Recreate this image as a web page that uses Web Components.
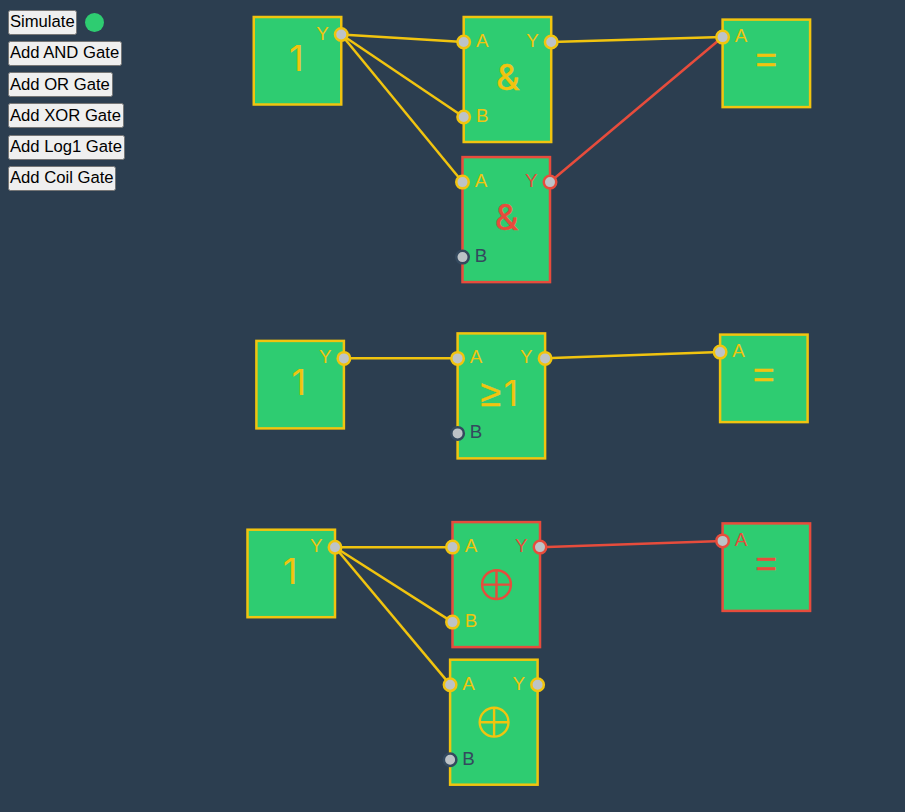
<!DOCTYPE html>
<html lang="en">
<head>
<meta charset="utf-8">
<title>Logic simulator</title>
<style>
html,body{margin:0;height:100%;background:#2c3e50;overflow:hidden}
body{font-family:"Liberation Sans",Arial,sans-serif}
</style>
</head>
<body>
<logic-app></logic-app>
<script>
const COLORS = { on: '#f1c40f', off: '#e74c3c', none: '#34495e' };

class ToolButton extends HTMLElement {
  constructor() {
    super();
    this.attachShadow({ mode: 'open' }).innerHTML = `
      <style>
        :host{display:block;height:25px}
        button{display:block;box-sizing:border-box;height:25px;margin:0;padding:0 1.75px var(--lift,2px) .9px;border:1px solid #767676;border-radius:2.5px;
          background:#efefef;color:#000;font:16.667px/20px "Liberation Sans",Arial,sans-serif;white-space:nowrap}
      </style>
      <button><slot></slot></button>`;
  }
}
customElements.define('tool-button', ToolButton);

class StatusLamp extends HTMLElement {
  constructor() {
    super();
    this.attachShadow({ mode: 'open' }).innerHTML = `
      <style>:host{display:block;width:19px;height:19px;border-radius:50%;background:#2ecc71}</style>`;
  }
}
customElements.define('status-lamp', StatusLamp);

class ToolPanel extends HTMLElement {
  constructor() {
    super();
    this.attachShadow({ mode: 'open' }).innerHTML = `
      <style>
        :host{display:flex;flex-direction:column;align-items:flex-start;gap:6px;padding:10px 8px}
        .row{display:flex;align-items:center;gap:8px}
        .low{--lift:0px}
        .space{margin-top:1px}
        status-lamp{margin-top:-1px}
      </style>
      <div class="row"><tool-button>Simulate</tool-button><status-lamp></status-lamp></div>
      <tool-button>Add AND Gate</tool-button>
      <tool-button class="low">Add OR Gate</tool-button>
      <tool-button class="low">Add XOR Gate</tool-button>
      <tool-button class="space">Add Log1 Gate</tool-button>
      <tool-button>Add Coil Gate</tool-button>`;
  }
}
customElements.define('tool-panel', ToolPanel);

/* Symbol in the middle of a gate; (43.75, cy) is the body's centre. */
const SYMBOLS = {
  and:  (cy, c) => `<text class="symbol amp" x="43.9" y="${cy + 10.8}" fill="${c}" stroke="${c}" stroke-width=".4">&amp;</text>`,
  or:   (cy, c) => `<text class="symbol" x="33.2" y="${cy + 10.5}" fill="${c}" stroke="${c}" stroke-width=".4">≥</text><text class="symbol one" x="53.2" y="${cy + 10.5}" fill="${c}">1</text>`,
  xor:  (cy, c) => `<g fill="none" stroke="${c}" stroke-width="2.4"><circle cx="44" cy="${cy}" r="14.4"/><path d="M29.6 ${cy}h28.8M44 ${cy - 14.4}v28.8"/></g>`,
  log1: (cy, c) => `<text class="symbol one" x="42.5" y="${cy + 10.5}" fill="${c}">1</text>`,
  coil: (cy, c) => `<text class="symbol" x="43.5" y="${cy + 9.1}" fill="${c}" stroke="${c}" stroke-width=".3">=</text>`
};

/* A gate on the canvas: x, y, kind, state, and "name:state" ports. */
class LogicGate extends HTMLElement {
  connectedCallback() {
    const x = +this.getAttribute('x'), y = +this.getAttribute('y');
    const kind = this.getAttribute('kind');
    const small = kind === 'log1' || kind === 'coil';
    const h = small ? 87.5 : 125, first = small ? 17.5 : 25;
    const left = Math.floor(x) - 10, top = Math.floor(y) - 10;
    const port = p => {
      const [name, state] = p.split(':');
      const px = name === 'Y' ? 87.5 : 0, py = name === 'B' ? 100 : first;
      const tx = name === 'Y' ? px - 18.75 : px + 18.5, c = COLORS[state];
      return `<text class="label" x="${tx}" y="${py + 5}" fill="${c}">${name}</text>
        <circle cx="${px}" cy="${py}" r="6.25" fill="#bdc3c7" stroke="${c}" stroke-width="2.5"/>`;
    };
    const c = COLORS[this.getAttribute('state')];
    this.attachShadow({ mode: 'open' }).innerHTML = `
      <style>
        :host{display:block;position:absolute;left:${left}px;top:${top}px}
        svg{display:block}
        text{font-family:"Liberation Sans",Arial,sans-serif;text-anchor:middle}
        .label{font-size:18.75px}
        .symbol{font-size:37.5px}
        .one{font-family:Inter,sans-serif;font-size:36px}
        .amp{font-family:Roboto,sans-serif;font-weight:400}
      </style>
      <svg width="108" height="${h + 21}">
        <g transform="translate(${x - left} ${y - top})">
          <rect width="87.5" height="${h}" fill="#2ecc71" stroke="${c}" stroke-width="2.5"/>
          ${SYMBOLS[kind](h / 2, c)}
          ${this.getAttribute('ports').split(' ').map(port).join('')}
        </g>
      </svg>`;
  }
}
customElements.define('logic-gate', LogicGate);

class WireLayer extends HTMLElement {
  connectedCallback() {
    const wires = [
      [341.25, 34.5, 463.7, 42, 'on'], [341.25, 34.5, 463.7, 117, 'on'],
      [341.25, 34.5, 462.5, 182, 'on'], [551.2, 42, 722.6, 37, 'on'],
      [550, 182, 722.6, 37, 'off'],
      [343.9, 358.3, 457.6, 358.3, 'on'], [545.1, 358.3, 720.1, 352.1, 'on'],
      [335, 547.2, 452.5, 547.2, 'on'], [335, 547.2, 452.5, 622.1, 'on'],
      [335, 547.2, 450.1, 684.6, 'on'], [540, 547.2, 722.6, 540.9, 'off']
    ];
    this.attachShadow({ mode: 'open' }).innerHTML = `
      <style>:host{display:block;position:absolute;inset:0}svg{display:block}</style>
      <svg width="905" height="812" stroke-width="2.5">${wires.map(w =>
        `<line x1="${w[0]}" y1="${w[1]}" x2="${w[2]}" y2="${w[3]}" stroke="${COLORS[w[4]]}"/>`).join('')}</svg>`;
  }
}
customElements.define('wire-layer', WireLayer);

class GateCanvas extends HTMLElement {
  constructor() {
    super();
    this.attachShadow({ mode: 'open' }).innerHTML = `
      <style>:host{display:block;position:absolute;inset:0;overflow:hidden;pointer-events:none}</style>
      <wire-layer></wire-layer>
      <logic-gate kind="log1" x="253.75" y="17" state="on" ports="Y:on"></logic-gate>
      <logic-gate kind="and" x="463.7" y="17" state="on" ports="A:on B:on Y:on"></logic-gate>
      <logic-gate kind="and" x="462.5" y="157.1" state="off" ports="A:on B:none Y:off"></logic-gate>
      <logic-gate kind="coil" x="722.6" y="19.6" state="on" ports="A:on"></logic-gate>
      <logic-gate kind="log1" x="256.4" y="340.9" state="on" ports="Y:on"></logic-gate>
      <logic-gate kind="or" x="457.6" y="333.4" state="on" ports="A:on B:none Y:on"></logic-gate>
      <logic-gate kind="coil" x="720.1" y="334.6" state="on" ports="A:on"></logic-gate>
      <logic-gate kind="log1" x="247.5" y="529.7" state="on" ports="Y:on"></logic-gate>
      <logic-gate kind="xor" x="452.5" y="522.1" state="off" ports="A:on B:on Y:off"></logic-gate>
      <logic-gate kind="xor" x="450.1" y="659.7" state="on" ports="A:on B:none Y:on"></logic-gate>
      <logic-gate kind="coil" x="722.6" y="523.4" state="off" ports="A:off"></logic-gate>`;
  }
}
customElements.define('gate-canvas', GateCanvas);

class LogicApp extends HTMLElement {
  constructor() {
    super();
    this.attachShadow({ mode: 'open' }).innerHTML = `
      <style>:host{display:block;position:relative;width:905px;height:812px;background:#2c3e50}</style>
      <tool-panel></tool-panel>
      <gate-canvas></gate-canvas>`;
  }
}
customElements.define('logic-app', LogicApp);
</script>
</body>
</html>
